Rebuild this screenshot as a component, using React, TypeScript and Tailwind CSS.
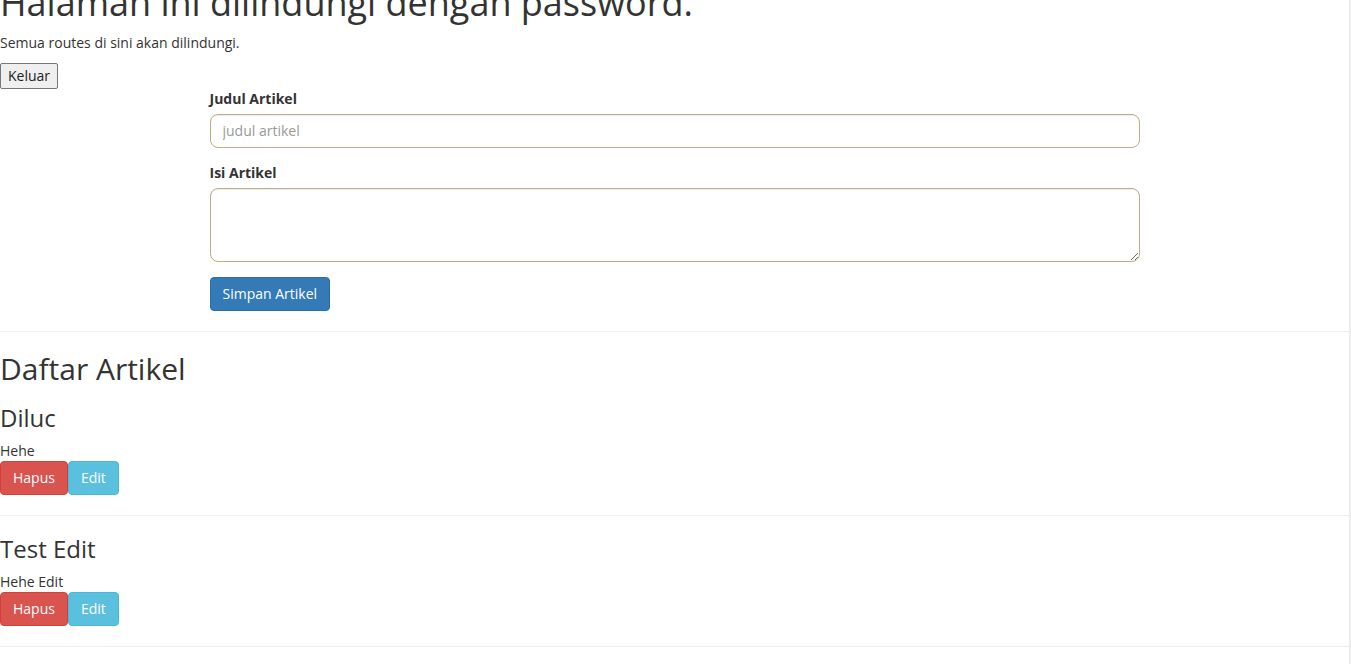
import React from "react";

const articles = [
  { title: "Diluc", body: "Hehe" },
  { title: "Test Edit", body: "Hehe Edit" },
];

export default function App() {
  return (
    <div
      className="flex min-h-screen overflow-hidden bg-white text-[14px] leading-[20px] text-[#333]"
      style={{ fontFamily: '"Open Sans", "Noto Sans", sans-serif' }}
    >
      <div className="flex-1 min-w-0">
        <h1 className="-mt-[17px] mb-[10px] text-[36px] leading-[39.6px] font-normal">
          Halaman ini dilindungi dengan password.
        </h1>
        <p className="mb-[10px]">Semua routes di sini akan dilindungi.</p>
        <button className="block h-[26px] w-[58px] border border-[#767676] rounded-[2px] bg-[#efefef] text-[14px] leading-[20px] text-[#222]">
          Keluar
        </button>

        <form className="w-[930px] mx-auto" onSubmit={(e) => e.preventDefault()}>
          <div className="mb-[15px]">
            <label className="inline-block mb-[5px] font-bold">Judul Artikel</label>
            <input
              type="text"
              placeholder="judul artikel"
              className="block w-full h-[34px] px-[12px] py-[6px] border border-[#c8aa80] rounded-[8px] bg-white text-[14px] leading-[20px] text-[#555] placeholder:text-[#999] shadow-[inset_0_1px_1px_rgba(0,0,0,0.075)] outline-none"
            />
          </div>
          <div className="mb-[15px]">
            <label className="inline-block mb-[5px] font-bold">Isi Artikel</label>
            <textarea
              rows={3}
              className="block w-full h-[74px] px-[12px] py-[6px] border border-[#c8aa80] rounded-[8px] bg-white text-[14px] leading-[20px] text-[#555] shadow-[inset_0_1px_1px_rgba(0,0,0,0.075)] outline-none"
            />
          </div>
          <button
            type="submit"
            className="h-[34px] px-[12px] py-[6px] border border-[#2e6da4] rounded-[4px] bg-[#337ab7] text-white text-[14px] leading-[20px]"
          >
            Simpan Artikel
          </button>
        </form>

        <hr className="mt-[20px] mb-[20px] border-0 border-t border-[#eee]" />

        <h2 className="mb-[10px] text-[30px] leading-[33px] font-normal">Daftar Artikel</h2>

        {articles.map((a, i) => (
          <div key={i}>
            <h3 className={(i === 0 ? "mt-[20px]" : "mt-0") + " mb-[10px] text-[24px] leading-[26.4px] font-normal"}>
              {a.title}
            </h3>
            <div>{a.body}</div>
            <div className="flex">
              <button className="h-[34px] px-[12px] py-[6px] border border-[#d43f3a] rounded-[4px] bg-[#d9534f] text-white text-[14px] leading-[20px]">
                Hapus
              </button>
              <button className="h-[34px] px-[12px] py-[6px] border border-[#46b8da] rounded-[4px] bg-[#5bc0de] text-white text-[14px] leading-[20px]">
                Edit
              </button>
            </div>
            <hr className="mt-[20px] mb-[20px] border-0 border-t border-[#eee]" />
          </div>
        ))}
      </div>
      <div className="w-[2px] shrink-0 bg-[#ececec]" />
    </div>
  );
}
